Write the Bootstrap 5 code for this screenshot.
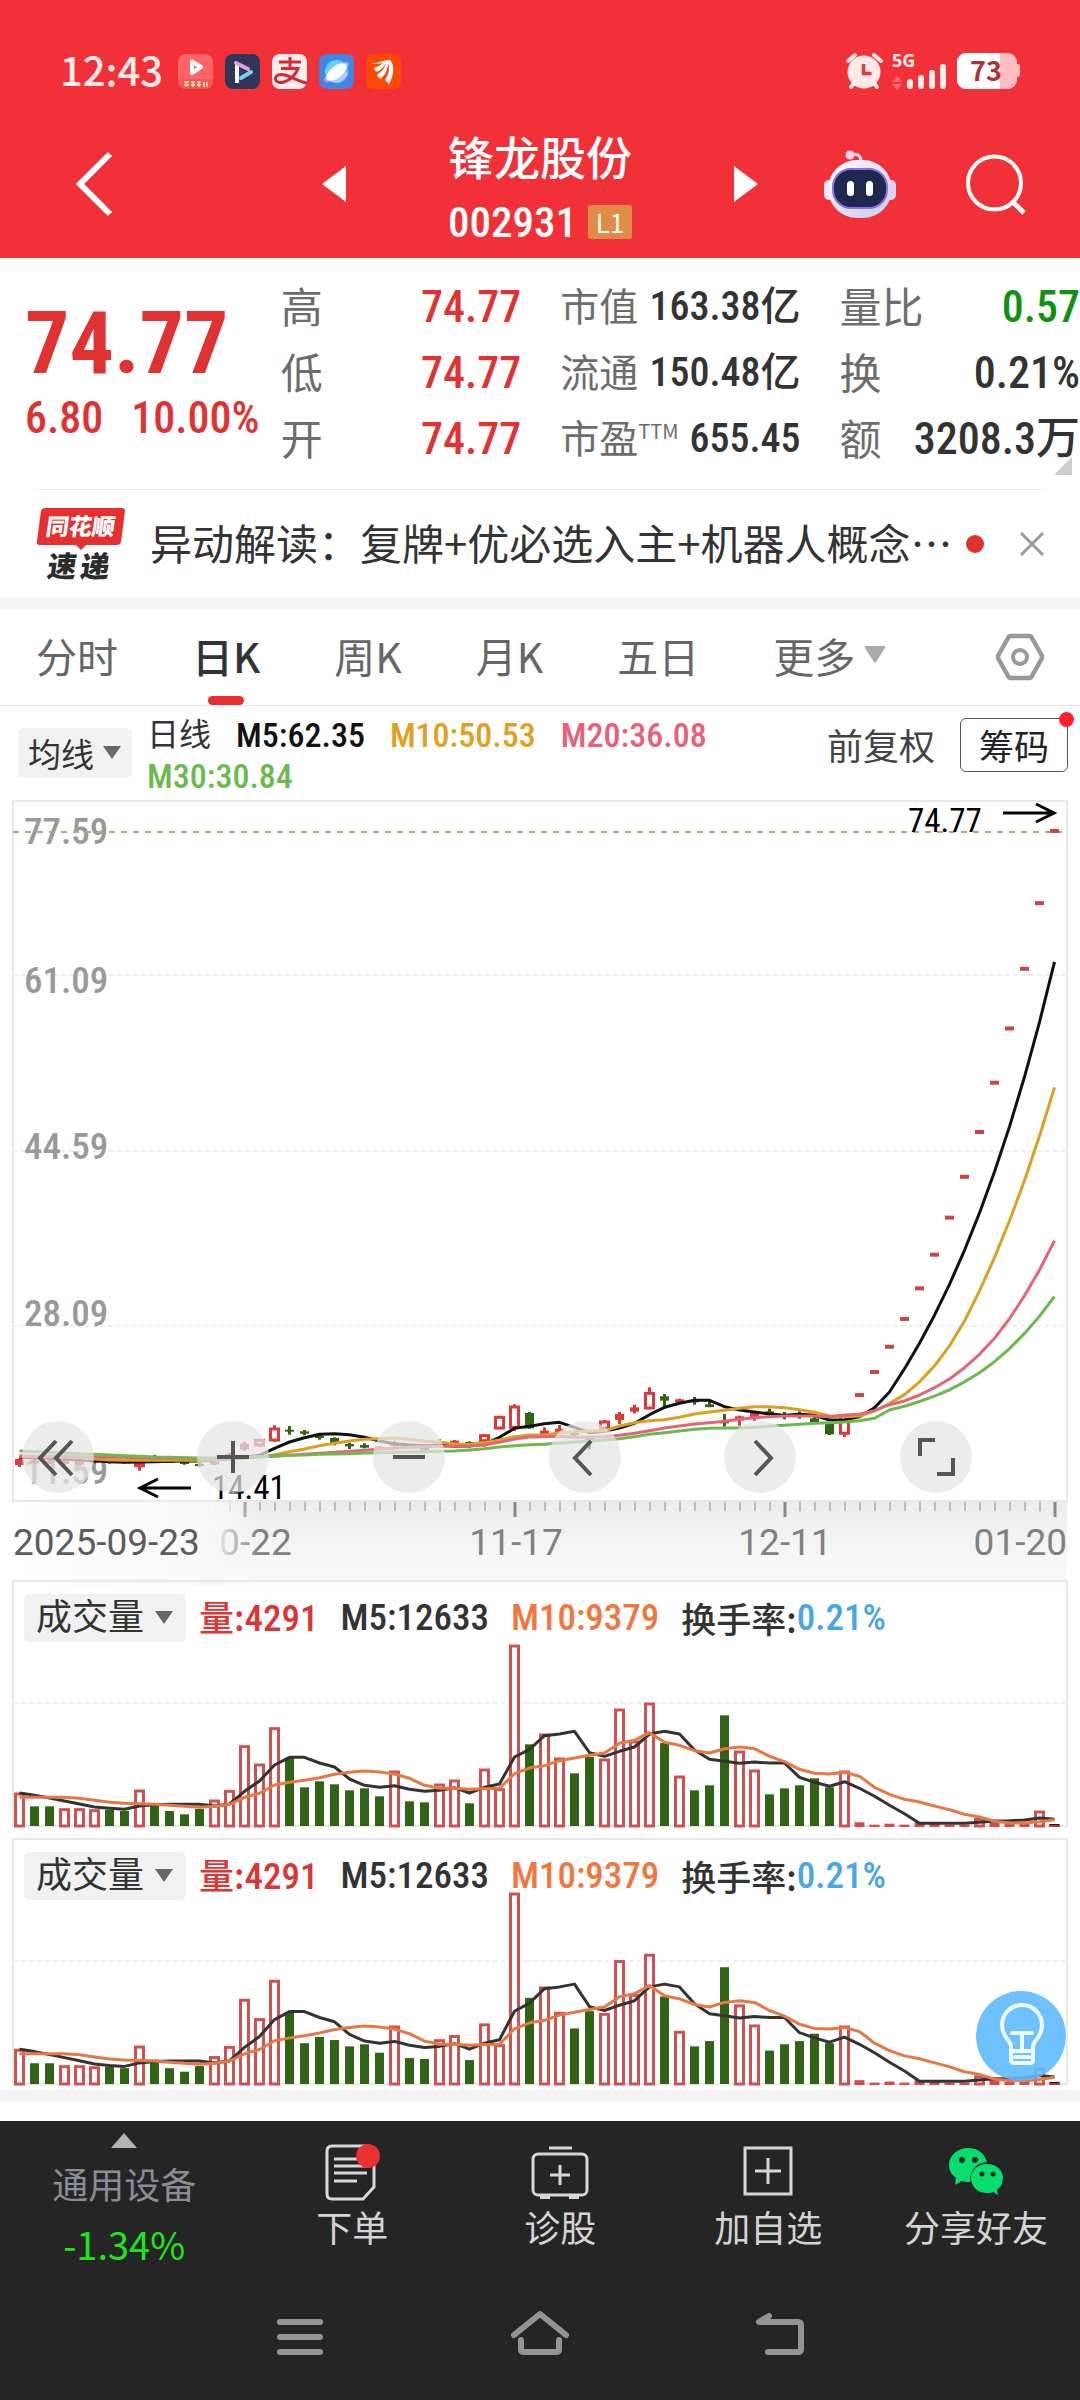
<!DOCTYPE html>
<html lang="zh-CN">
<head>
<meta charset="utf-8">
<meta name="viewport" content="width=device-width, initial-scale=1">
<title>锋龙股份 002931</title>
<link href="https://cdn.jsdelivr.net/npm/bootstrap@5.3.0/dist/css/bootstrap.min.css" rel="stylesheet">
<style>
  :root { --num: "Roboto Condensed", Roboto, "Noto Sans CJK SC", sans-serif; --cjk: "Noto Sans CJK SC", "Noto Sans", sans-serif; }
  body { font-family: var(--cjk); background: #fff; color: #333; overflow-x: hidden; }
  button { font-family: inherit; white-space: nowrap; }
  svg { display: block; flex: none; overflow: visible; }
  .even { flex: 1 1 0; min-width: 0; }
  .plain { background: none; border: 0; padding: 0; color: inherit; text-decoration: none; }
  .num { font-family: var(--num); font-weight: 500; }
  .up { color: #e03232; }
  .top-red { background: #f13038; color: #fff; }
  .status { height: 110px; padding: 47px 60px 0 60px; }
  .clock { font-size: 40px; font-weight: 500; line-height: 44px; margin-bottom: 4px; color: #ffeaea; width: 106px; }
  .app-icons { gap: 12px; margin-left: 12px; }
  .title-bar { height: 148px; }
  .title-side { flex: 1 1 200px; }
  .title-left { padding-left: 76px; }
  .title-right { padding: 0 54px 0 66px; }
  .title-mid { gap: 102px; }
  .stock-name { font-size: 46px; line-height: 56px; font-weight: 500; margin: 0 0 4px; }
  .stock-code { font-size: 43px; line-height: 70px; }
  .level { background: #e08c46; border-radius: 3px; width: 44px; height: 34px; font-size: 26px; line-height: 34px; font-family: var(--cjk); font-weight: 400; }
  .quote { height: 231px; padding-top: 16px; }
  .price-box { flex: 0 0 26%; padding: 19px 0 0 25px; }
  .price { font-size: 88px; line-height: 100px; font-weight: 700; }
  .change { font-size: 44px; line-height: 50px; gap: 28px; }
  .stats { gap: 39px; }
  .stat { height: 66px; font-size: 42px; color: #6c6c6c; }
  .stat-name { margin-top: -6px; }
  .stat .num { font-size: 44px; color: #333; }
  .stat .num.up { color: #e03232; }
  .stat .num.down { color: #109010; }
  .mid-col .stat { font-size: 39px; }
  .mid-col .stat .num { font-size: 40px; }
  .stat sup { font-size: 20px; top: -14px; }
  .fold { right: 8px; bottom: 14px; }
  .news { margin: 0 36px; border-top: 1px solid #eee; height: 108px; font-size: 42px; }
  .news-link { margin: -4px 0 0 24px; color: #333; }
  .news-dot { width: 18px; height: 18px; border-radius: 50%; background: #e63030; margin-left: 13px; }
  .band { height: 12px; background: #f4f4f4; }
  .tabs { height: 97px; border-bottom: 1px solid #e6e6e6; padding: 0 36px; }
  .tab-list { gap: 74px; }
  .tab-list button { font-size: 41px; line-height: 92px; padding-bottom: 4px; color: #666; }
  .tab-list .on { color: #333; font-weight: 500; }
  .tab-list .on::after { content: ""; position: absolute; left: 50%; bottom: 0; width: 36px; height: 9px; margin-left: -18px; border-radius: 5px; background: #e63030; }
  .ma-row { height: 94px; padding: 0 12px 0 18px; }
  .pick { background: #f1f1f1; border: 0; border-radius: 6px; color: #333; height: 50px; font-size: 33px; line-height: 50px; padding: 0 10px; gap: 8px; }
  .ma-list { font-size: 34px; line-height: 41px; column-gap: 25px; margin: 9px 0 0 15px; }
  .ma-list .cjk { font-size: 32px; font-weight: 400; }
  .m5 { color: #111; } .m10 { color: #e0a020; } .m20 { color: #e86078; } .m30 { color: #6aba50; }
  .adjust { font-size: 36px; color: #444; margin: 11px 25px 0 0; line-height: 54px; }
  .chips { border: 1px solid #555; border-radius: 6px; background: #fff; color: #222; width: 108px; height: 54px; font-size: 35px; line-height: 50px; margin-top: 12px; }
  .chips i { position: absolute; right: -7px; top: -7px; width: 15px; height: 15px; border-radius: 50%; background: #ff2030; }
  .kchart { width: 100%; height: auto; }
  .axis { font-family: Roboto, sans-serif; font-size: 37px; }
  .chart-tools { position: absolute; left: 2%; right: 10%; top: 79.6%; }
  .tool { width: 72px; height: 72px; border-radius: 50%; background: rgba(228,228,228,.72); }
  .vol { margin-bottom: 10px; }
  .vol-head { position: absolute; left: 24px; top: 12px; font-size: 37px; line-height: 48px; white-space: nowrap; }
  .vol-head .pick { height: 48px; font-size: 36px; line-height: 48px; padding: 0 12px; gap: 10px; margin-right: 13px; }
  .vol-head .cjk { font-family: var(--cjk); font-size: 35px; }
  .v-now, .v-5, .v-10 { margin-right: 22px; }
  .v-now { color: #dd3434; } .v-10 { color: #f07840; } .v-rate { color: #46a6e6; }
  .bulb { right: 14px; bottom: 5px; width: 90px; height: 90px; border-radius: 50%; background: rgba(94,186,255,.9); }
  .dock { background: #252525; color: #d4d4d4; margin-top: 19px; height: 279px; }
  .dock-row { height: 167px; }
  .sector { flex: 0 0 23%; padding-top: 12px; }
  .sector .nm { font-size: 36px; line-height: 50px; color: #8c8c96; margin-top: 10px; }
  .sector .pc { font-size: 38px; line-height: 50px; color: #1ee61e; margin-top: 11px; }
  .dock-btn { padding-top: 20px; font-size: 36px; line-height: 50px; }
  .sys { padding: 20px 180px 0; }
</style>
</head>
<body>
<header class="top-red">
  <div class="status">
    <div class="d-flex align-items-center">
      <span class="clock">12:43</span>
      <div class="app-icons d-flex">
        <svg width="35" height="35" viewBox="0 0 35 35"><rect width="35" height="35" rx="8" fill="#ff6468"/><path d="M0 25h35v2a8 8 0 0 1-8 8H8a8 8 0 0 1-8-8z" fill="#ef5a50"/><path d="M14 7.500l9 5.500-9 6z" fill="none" stroke="#fff" stroke-width="4" stroke-linejoin="round"/><path d="M6 28h5M8.500 28v5M6 31h5M13 28h4M13 31h4M15 28v5M19 28h4M19 31h4M21 28v5M26 28v5M29 28v5" stroke="#ffe0c8" stroke-width="1.500"/></svg>
        <svg width="35" height="35" viewBox="0 0 35 35"><rect width="35" height="35" rx="8" fill="#30355a"/><path d="M12 13v14" stroke="#fff" stroke-width="4" stroke-linecap="square"/><path d="M11 9l12 6" stroke="#e8a0dc" stroke-width="4" stroke-linecap="round"/><path d="M16 24l10-6" stroke="#78d0f4" stroke-width="4" stroke-linecap="round"/></svg>
        <svg width="35" height="35" viewBox="0 0 35 35"><rect width="35" height="35" rx="8" fill="#ffecec"/><path d="M7 8h22M18 3v11M9 14.500h17c-2 6-8 12-14 13.500-6 1.500-9-1-8.500-4 .5-3 5-4.500 9.500-3C20 23 27 28 35 29" fill="none" stroke="#cf2c34" stroke-width="3"/></svg>
        <svg width="35" height="35" viewBox="0 0 35 35"><rect width="35" height="35" rx="8" fill="#4684e4"/><circle cx="17.500" cy="17.500" r="11.500" fill="#60d0fa"/><path d="M8 24c6 7 18 5 21-5l-5-2z" fill="#b4ccf4"/><ellipse cx="17.500" cy="18" rx="15" ry="5" transform="rotate(-38 17.500 18)" fill="#8cb8f4"/><ellipse cx="17.500" cy="18" rx="12" ry="6" transform="rotate(-38 17.500 18)" fill="#fff"/></svg>
        <svg width="35" height="35" viewBox="0 0 35 35"><rect width="35" height="35" rx="8" fill="#ff4a04"/><path d="M6 9C12 10 16 6 24 6c4 4 5 14-1 24l-4-4c4-6 5-12 3-17 0 6-3 13-8 16l-3-4c4-3 8-7 9-12-3 5-6 8-10 9l-2-4c4-1 7-3 9-6-3 2-8 2-10 2z" fill="#fff"/></svg>
      </div>
      <div class="ms-auto d-flex">
        <svg width="174" height="36" viewBox="0 0 174 36">
          <circle cx="18" cy="19" r="16.500" fill="#ffe8e8"/><path d="M2 8l7-6M35 8l-7-6M5 34l4-5M31 34l-4-5" stroke="#ffe8e8" stroke-width="4" stroke-linecap="round"/><path d="M17.500 11v9.500h8" fill="none" stroke="#e03a40" stroke-width="3.500"/>
          <text x="46" y="14" font-family="Noto Sans, sans-serif" font-weight="700" font-size="18" fill="#ffe8e8">5G</text>
          <path d="M46 29l5-6 5 6zM46 31h10l-5 6z" fill="#fb6a70"/>
          <path d="M64 29v4M75 25v8M86 20v13M97 14v19" stroke="#ffeaea" stroke-width="6" stroke-linecap="round"/>
          <rect x="111" width="60" height="36" rx="9" fill="#ffbcc0"/><rect x="170" y="11" width="4" height="13" rx="2" fill="#ffbcc0"/><path d="M154 0v36h-34a9 9 0 0 1-9-9V9a9 9 0 0 1 9-9z" fill="#fff"/>
          <text x="124" y="28" font-family="Noto Sans CJK SC, sans-serif" font-weight="700" font-size="27" fill="#b03038">73</text>
        </svg>
      </div>
    </div>
  </div>
  <nav class="title-bar d-flex align-items-center">
    <div class="title-side title-left d-flex">
      <button class="plain" aria-label="返回"><svg width="38" height="66" viewBox="0 0 38 66"><path d="M34 3L4 33l30 30" fill="none" stroke="#fff" stroke-width="6"/></svg></button>
    </div>
    <div class="title-mid d-flex align-items-center">
      <button class="plain" aria-label="上一只"><svg width="24" height="36"><path d="M24 0v36L0 18z" fill="#fff"/></svg></button>
      <div class="pt-3">
        <h1 class="stock-name">锋龙股份</h1>
        <div class="stock-code num d-flex align-items-center justify-content-between">002931<span class="level text-center">L1</span></div>
      </div>
      <button class="plain" aria-label="下一只"><svg width="24" height="36"><path d="M0 0v36l24-18z" fill="#fff"/></svg></button>
    </div>
    <div class="title-side title-right d-flex justify-content-between align-items-center">
      <button class="plain" aria-label="智能助手"><svg width="72" height="68" viewBox="0 0 72 68"><defs><linearGradient id="rb" x1="0" y1="0" x2="1" y2="1"><stop offset="0" stop-color="#fff"/><stop offset="1" stop-color="#c8c8f0"/></linearGradient></defs><path d="M27 5c5-2 10 0 10 6" fill="none" stroke="#f6d8ea" stroke-width="3"/><circle cx="26" cy="5" r="4.500" fill="#f0d4f0"/><rect x="0" y="30" width="10" height="20" rx="5" fill="#e8e8fa"/><rect x="62" y="30" width="10" height="20" rx="5" fill="#d8d4f4"/><rect x="4" y="10" width="64" height="58" rx="29" fill="url(#rb)"/><rect x="9" y="19" width="54" height="39" rx="18" fill="#1f2950" stroke="#8c6ce8" stroke-width="2"/><rect x="23" y="31" width="7" height="15" rx="3.500" fill="#fff"/><rect x="42" y="31" width="7" height="15" rx="3.500" fill="#fff"/></svg></button>
      <button class="plain" aria-label="搜索"><svg width="60" height="62" viewBox="0 0 60 62"><circle cx="28.500" cy="30" r="26.500" fill="none" stroke="#fff" stroke-width="4"/><path d="M47 49l11 11" stroke="#fff" stroke-width="5"/></svg></button>
    </div>
  </nav>
</header>

<main>
  <section class="quote d-flex position-relative">
    <div class="price-box up">
      <div class="price num">74.77</div>
      <div class="change num d-flex"><span>6.80</span><span>10.00%</span></div>
    </div>
    <div class="stats d-flex flex-fill">
      <div class="even">
        <div class="stat d-flex justify-content-between align-items-center"><span class="stat-name">高</span><span class="num up">74.77</span></div>
        <div class="stat d-flex justify-content-between align-items-center"><span class="stat-name">低</span><span class="num up">74.77</span></div>
        <div class="stat d-flex justify-content-between align-items-center"><span class="stat-name">开</span><span class="num up">74.77</span></div>
      </div>
      <div class="even mid-col text-nowrap">
        <div class="stat d-flex justify-content-between align-items-center"><span class="stat-name">市值</span><span class="num">163.38亿</span></div>
        <div class="stat d-flex justify-content-between align-items-center"><span class="stat-name">流通</span><span class="num">150.48亿</span></div>
        <div class="stat d-flex justify-content-between align-items-center"><span class="stat-name">市盈<sup>TTM</sup></span><span class="num">655.45</span></div>
      </div>
      <div class="even text-nowrap">
        <div class="stat d-flex justify-content-between align-items-center"><span class="stat-name">量比</span><span class="num down">0.57</span></div>
        <div class="stat d-flex justify-content-between align-items-center"><span class="stat-name">换</span><span class="num">0.21%</span></div>
        <div class="stat d-flex justify-content-between align-items-center"><span class="stat-name">额</span><span class="num">3208.3万</span></div>
      </div>
    </div>
    <svg class="fold position-absolute" width="18" height="18"><path d="M18 0v18H0z" fill="#ccc"/></svg>
  </section>

  <section class="news d-flex align-items-center">
    <svg width="90" height="74" viewBox="0 0 90 74" role="img" aria-label="同花顺速递"><path d="M9 1h77q3 0 3 3l-4 31q-1 3-4 3H50l-5 5-5-5H4q-4 0-3-4L5 4q1-3 4-3z" fill="#e63030"/><g transform="skewX(-8)" font-family="Noto Sans CJK SC, sans-serif" font-weight="900"><text x="13" y="28" font-size="23" fill="#fff">同花顺</text><text x="20" y="70" font-size="29" fill="#2c2c2c">速</text><text x="53" y="70" font-size="29" fill="#2c2c2c">递</text></g></svg>
    <a class="news-link plain text-nowrap" href="#">异动解读：复牌+优必选入主+机器人概念…</a>
    <span class="news-dot"></span>
    <button class="plain ms-auto" aria-label="关闭"><svg width="24" height="24"><path d="M1 1l22 22M23 1L1 23" stroke="#999" stroke-width="3"/></svg></button>
  </section>
  <div class="band"></div>

  <nav class="tabs d-flex align-items-center">
    <div class="tab-list d-flex">
      <button class="plain">分时</button>
      <button class="plain on position-relative">日K</button>
      <button class="plain">周K</button>
      <button class="plain">月K</button>
      <button class="plain">五日</button>
      <button class="plain d-flex align-items-center gap-2">更多<svg width="24" height="20"><path d="M3 1h18q2 0 1 2l-9 14q-1 2-2 0L2 3Q1 1 3 1z" fill="#aaa"/></svg></button>
    </div>
    <button class="plain ms-auto" aria-label="设置"><svg width="48" height="48" viewBox="0 0 48 48"><path d="M15 3h18q2 0 3 2l9.500 17q1 2 0 4L36 43q-1 2-3 2H15q-2 0-3-2L2.500 26q-1-2 0-4L12 5q1-2 3-2z" fill="none" stroke="#999" stroke-width="4.500"/><circle cx="24" cy="24" r="7" fill="none" stroke="#999" stroke-width="4"/></svg></button>
  </nav>

  <section class="ma-row d-flex">
    <button class="pick d-flex align-items-center align-self-center">均线<svg width="20" height="14"><path d="M1 0h18l-9 13z" fill="#666"/></svg></button>
    <div class="ma-list num even d-flex flex-wrap align-content-start">
      <span class="cjk">日线</span><span class="m5">M5:62.35</span><span class="m10">M10:50.53</span><span class="m20">M20:36.08</span><span class="m30">M30:30.84</span>
    </div>
    <button class="plain adjust align-self-start">前复权</button>
    <button class="chips position-relative p-0">筹码<i></i></button>
  </section>

  <section class="position-relative">
    <svg class="kchart" id="kline" viewBox="0 0 1080 780" role="img" aria-label="日K线图"></svg>
    <div class="chart-tools d-flex justify-content-between">
      <button class="plain tool" aria-label="最早"><svg width="72" height="72"><path d="M34 20L18 37l16 17M50 20L34 37l16 17" fill="none" stroke="#555" stroke-width="4"/></svg></button>
      <button class="plain tool" aria-label="放大"><svg width="72" height="72"><path d="M20 36h32M36 20v32" stroke="#555" stroke-width="4"/></svg></button>
      <button class="plain tool" aria-label="缩小"><svg width="72" height="72"><path d="M20 36h32" stroke="#555" stroke-width="4"/></svg></button>
      <button class="plain tool" aria-label="向左"><svg width="72" height="72"><path d="M42 20L26 37l16 17" fill="none" stroke="#555" stroke-width="4"/></svg></button>
      <button class="plain tool" aria-label="向右"><svg width="72" height="72"><path d="M31 20l16 17-16 17" fill="none" stroke="#555" stroke-width="4"/></svg></button>
      <button class="plain tool" aria-label="全屏"><svg width="72" height="72"><path d="M20 35V19h15M53 37v16H37" fill="none" stroke="#555" stroke-width="4"/></svg></button>
    </div>
  </section>

  <section class="vol position-relative">
    <svg class="kchart" id="vol1" viewBox="0 0 1080 248"></svg>
    <div class="vol-head num d-flex align-items-center">
      <button class="pick d-flex align-items-center">成交量<svg width="20" height="14"><path d="M1 0h18l-9 13z" fill="#666"/></svg></button>
      <span class="v-now"><span class="cjk">量:</span>4291</span><span class="v-5">M5:12633</span><span class="v-10">M10:9379</span><span class="cjk">换手率:</span><span class="v-rate">0.21%</span>
    </div>
  </section>
  <section class="vol position-relative mb-1">
    <svg class="kchart" id="vol2" viewBox="0 0 1080 248"></svg>
    <div class="vol-head num d-flex align-items-center">
      <button class="pick d-flex align-items-center">成交量<svg width="20" height="14"><path d="M1 0h18l-9 13z" fill="#666"/></svg></button>
      <span class="v-now"><span class="cjk">量:</span>4291</span><span class="v-5">M5:12633</span><span class="v-10">M10:9379</span><span class="cjk">换手率:</span><span class="v-rate">0.21%</span>
    </div>
    <button class="bulb plain position-absolute" aria-label="提示"><svg width="90" height="90" viewBox="0 0 90 90"><path d="M35 56c0-7-9-9-9-22a20 20 0 0 1 40 0c0 13-9 15-9 22v13q0 3-3 3H38q-3 0-3-3zM35 60h22M39 66h14M36 42h20M46 42v18" fill="none" stroke="#f0fbff" stroke-width="4" stroke-linecap="round"/></svg></button>
  </section>
  <div class="band"></div>
</main>

<footer class="dock">
  <div class="dock-row d-flex">
    <a class="sector plain d-flex flex-column align-items-center" href="#">
      <svg width="26" height="15"><path d="M13 0l13 15H0z" fill="#b4b4b4"/></svg>
      <span class="nm">通用设备</span><span class="pc">-1.34%</span>
    </a>
    <button class="plain dock-btn even d-flex flex-column align-items-center">
      <svg width="56" height="60" viewBox="0 0 56 60"><path d="M8 5h36q6 0 6 6v35L39 58H8q-5 0-5-5V10q0-5 5-5z" fill="none" stroke="#d8d8d8" stroke-width="3"/><path d="M10 18h30M10 25h33M10 32h33M10 40h23" stroke="#d8d8d8" stroke-width="3"/><circle cx="44" cy="15" r="12" fill="#e83030"/></svg>下单</button>
    <button class="plain dock-btn even d-flex flex-column align-items-center">
      <svg width="58" height="60" viewBox="0 0 58 60"><path d="M18 7h23" stroke="#d8d8d8" stroke-width="3"/><rect x="2" y="13" width="54" height="41" rx="5" fill="none" stroke="#d8d8d8" stroke-width="3"/><path d="M9 56h10M38 56h10" stroke="#d8d8d8" stroke-width="4"/><path d="M29 24v20M19 34h20" stroke="#d8d8d8" stroke-width="3"/></svg>诊股</button>
    <button class="plain dock-btn even d-flex flex-column align-items-center">
      <svg width="50" height="60" viewBox="0 0 50 60"><rect x="2" y="7" width="46" height="46" fill="none" stroke="#d8d8d8" stroke-width="3"/><path d="M25 17v26M12 30h26" stroke="#d8d8d8" stroke-width="3"/></svg>加自选</button>
    <button class="plain dock-btn even d-flex flex-column align-items-center">
      <svg width="56" height="60" viewBox="0 0 56 60"><path d="M20 7C9 7 1 15 1 24c0 6 3 10 7 13l-1 7 7-4c3 1 5 1 8 1 0-12 6-19 17-20C37 13 30 7 20 7z" fill="#06de6e"/><circle cx="14" cy="19" r="3" fill="#252525"/><circle cx="27" cy="19" r="3" fill="#252525"/><path d="M39 23c-9 0-16 6-16 14 0 9 7 15 16 15 2 0 4 0 6-1l5 3-1-5c4-3 6-7 6-12 0-8-7-14-16-14z" fill="#06de6e"/><circle cx="34" cy="33" r="2.500" fill="#252525"/><circle cx="45" cy="33" r="2.500" fill="#252525"/></svg>分享好友</button>
  </div>
  <div class="sys d-flex">
    <button class="plain even d-flex justify-content-center" aria-label="最近任务"><svg width="60" height="56" viewBox="0 0 60 56"><path d="M10 14h40M10 29h40M10 44h40" stroke="#949494" stroke-width="6" stroke-linecap="round"/></svg></button>
    <button class="plain even d-flex justify-content-center" aria-label="主页"><svg width="60" height="56" viewBox="0 0 60 56"><path d="M4 27L30 6l26 21M11 32v9q0 3 3 3h32q3 0 3-3v-9" fill="none" stroke="#949494" stroke-width="6" stroke-linecap="round" stroke-linejoin="round"/></svg></button>
    <button class="plain even d-flex justify-content-center" aria-label="返回上页"><svg width="60" height="56" viewBox="0 0 60 56"><path d="M19 8L9 14h39q3 0 3 3v24q0 3-3 3H18" fill="none" stroke="#949494" stroke-width="6" stroke-linecap="round" stroke-linejoin="round"/></svg></button>
  </div>
</footer>

<script src="https://cdn.jsdelivr.net/npm/bootstrap@5.3.0/dist/js/bootstrap.bundle.min.js"></script>
<script>
  const X = i => 19.5 + 15 * i;
  const RED = '#dc3a3a', GREEN = '#306414';
  const line = (ys, color, w) => `<polyline points="${ys.map((y, i) => X(i) + ',' + y.toFixed(1)).join(' ')}" fill="none" stroke="${color}" stroke-width="${w}" stroke-linejoin="round"/>`;

  /* candles: kind (h = hollow rise, r = rise, g = fall), body top, body bottom, high, low, in thirds of a unit */
  const Y = v => 540 + v / 3;
  const P = p => (77.59 - p) * 10.62;
  const candles = [
    ['r',357,375,355,381],['r',362,370,358,374],['r',362,370,360,372],['r',362,372,358,376],['r',366,374,362,379],['g',362,368,360,370],['g',364,369,362,371],['g',364,369,362,371],['h',365,380,362,392],['g',348,352,345,364],
    ['g',364,369,362,369],['g',366,372,364,374],['g',372,378,369,380],['r',366,374,364,375],['r',341,350,338,352],['r',311,328,305,332],['h',298,318,296,320],['h',264,303,256,305],['g',269,275,258,284],['g',274,281,270,286],
    ['g',286,294,284,299],['g',294,309,292,316],['g',312,319,308,327],['g',315,323,310,325],['r',320,324,318,326],['r',308,318,302,320],['r',316,322,314,324],['g',324,329,322,331],['r',304,318,297,320],['r',302,322,300,324],
    ['g',306,310,304,312],['h',284,305,282,320],['h',229,267,227,268],['h',198,265,193,273],['g',219,265,216,266],['r',272,285,262,288],['r',266,278,255,282],['g',275,285,272,287],['g',292,300,288,328],['h',243,268,240,270],
    ['r',222,240,216,252],['r',202,215,194,220],['h',157,207,142,208],['g',169,182,162,206],['r',178,187,176,189],['g',180,187,171,194],['g',193,201,180,202],['g',244,250,222,260],['r',229,242,227,257],['r',219,236,217,242],
    ['g',214,219,206,226],['g',222,228,216,238],['g',219,225,214,236],['g',235,247,230,248],['g',252,283,248,285],['h',224,283,222,291]];
  const limit = [21.65,23.82,26.20,28.82,31.70,34.87,38.36,42.20,46.42,51.06,56.17,61.79,67.97,74.77];
  const ma = {
    m5: [[352,353,355,357,359,362,365,367,366,365,364,363,363,360,357,352,346,325,306,293,283,281,284,292,303,311,315,317,316,318,318,312,292,265,259,251,247,262,278,274,264,250,224,202,190,181,181,200,210,216,222,226,223,226,240,239,230,203],
         [21.85,24.03,26.44,29.08,31.99,35.19,38.71,42.58,46.84,51.53,56.68,62.35], '#111'],
    m10: [[348,349,350,352,354,357,360,361,361,361,361,361,361,359,356,353,350,344,335,327,317,310,303,298,296,294,298,303,307,312,313,308,300,290,285,285,278,276,273,272,258,248,242,239,232,222,216,211,205,200,200,203,209,217,228,230,228,213],
         [20.75,21.6,22.8,24.3,26.2,28.53,31.38,34.5,37.97,41.76,45.94,50.53], '#dca020'],
    m20: [[348,349,349,349,350,351,352,352,353,354,354,355,356,356,355,353,351,349,346,343,340,337,334,331,328,325,322,320,319,319,318,315,307,297,291,290,289,292,292,290,286,280,272,264,258,252,248,244,238,233,230,228,228,228,230,225,223,212],
         [20.65,21,21.56,22.25,23.07,24.13,25.4,26.9,28.76,30.91,33.34,36.08], '#e66478'],
    m30: [[333,335,337,339,341,343,345,347,349,351,352,353,354,354,353,352,350,348,346,345,343,342,341,339,338,337,336,335,334,333,330,326,321,317,314,313,309,306,303,300,296,290,283,278,273,268,265,264,264,262,259,256,253,250,248,246,242,235],
         [20.15,20.5,20.95,21.45,22.05,22.8,23.65,24.7,25.93,27.36,28.98,30.84], '#6aba50']};

  let k = `<defs>
    <linearGradient id="axisBg" x1="0" y1="0" x2="0" y2="1"><stop offset="0" stop-color="#ebebeb"/><stop offset=".6" stop-color="#f6f6f6"/><stop offset="1" stop-color="#fafafa"/></linearGradient>
    <linearGradient id="axisFade" x1="0" x2="1" y1="0" y2="0"><stop offset="0" stop-color="#fff"/><stop offset=".8" stop-color="#f8f8f8"/><stop offset="1" stop-color="#f8f8f8" stop-opacity="0"/></linearGradient></defs>
    <rect x="13" y="702" width="1054" height="84" fill="url(#axisBg)"/>`;
  for (const y of [175, 351, 526]) k += `<path d="M13 ${y}H1067" stroke="#ebebeb" stroke-width="2" stroke-dasharray="4 4"/>`;
  k += `<path d="M13 701V1H1067V701Z" fill="none" stroke="#e8e8e8" stroke-width="2"/>`;
  [['77.59',44],['61.09',193],['44.59',359],['28.09',526],['11.59',684]].forEach(([t, y]) => k += `<text class="num" x="24" y="${y}" font-size="37" fill="#999">${t}</text>`);
  k += `<path d="M13 32H1062" stroke="#b8a478" stroke-width="2" stroke-dasharray="6 6"/>`;
  candles.forEach(([t, a, b, h, l], i) => {
    const c = t === 'g' ? GREEN : RED, x = X(i);
    if (t === 'h') k += `<path d="M${x} ${Y(h)}V${Y(a)}M${x} ${Y(b)}V${Y(l)}" stroke="${c}" stroke-width="3"/><rect x="${x - 4}" y="${Y(a) + 1}" width="8" height="${(b - a) / 3 - 2}" fill="#fff" stroke="${c}" stroke-width="3"/>`;
    else k += `<path d="M${x} ${Y(h)}V${Y(l)}" stroke="${c}" stroke-width="3"/><rect x="${x - 4.5}" y="${Y(a)}" width="9" height="${(b - a) / 3}" fill="${c}"/>`;
  });
  limit.forEach((p, j) => k += `<rect x="${X(56 + j) - 4.5}" y="${P(p) - 1}" width="9" height="4" fill="#cc4444"/>`);
  for (const [ys, ps, c] of Object.values(ma)) k += line(ys.map(Y).concat(ps.map(P)), c, 3);
  k += `<text class="num" style="font-weight:400" x="908" y="32" font-size="33" fill="#000">74.77</text><path d="M1003 13h50M1036 4l18 9-18 9" fill="none" stroke="#000" stroke-width="3"/>`;
  k += `<text class="num" style="font-weight:400" x="212" y="699" font-size="33" fill="#000">14.41</text><path d="M191 688h-50M158 679l-18 9 18 9" fill="none" stroke="#000" stroke-width="3"/>`;
  for (let i = 13; i < 70; i++) { const big = (i - 15) % 18 === 0; k += `<path d="M${X(i) + .5} 702v${big ? 15 : 9}" stroke="${big ? '#888' : '#bcbcbc'}" stroke-width="${big ? 3 : 2}"/>`; }
  [['10-22',245,'middle'],['11-17',516,'middle'],['12-11',785,'middle'],['01-20',1067,'end']].forEach(([t, x, a]) => k += `<text class="axis" x="${x}" y="755" text-anchor="${a}" fill="#808080">${t}</text>`);
  k += `<rect x="12" y="702" width="248" height="84" fill="url(#axisFade)"/><text class="axis" x="13" y="755" fill="#5c5c5c">2025-09-23</text>`;
  document.getElementById('kline').innerHTML = k;

  /* volume: bar tops and averages, in thirds of a unit, floor at 797 */
  const tops = [698,738,738,745,745,748,748,752,689,728,752,762,746,719,690,556,611,502,592,681,663,672,690,684,708,632,723,726,671,659,729,626,685,254,552,521,593,639,590,596,446,542,428,548,647,690,675,465,572,629,702,684,675,654,681,632,786,793,790,793,786,790,793,793,774,786,791,786,752,791];
  const falls = new Set([1,2,6,7,9,10,11,12,18,19,20,21,22,23,24,26,27,30,34,37,38,43,45,46,47,50,51,52,53,54]);
  const v5 = [698,705,713,722,731,740,744,747,737,733,732,732,732,737,731,693,662,614,591,591,608,620,656,675,681,676,687,693,690,682,698,681,671,590,567,526,521,513,577,588,573,560,521,513,521,569,597,603,609,605,608,608,651,666,678,664,684,708,735,760,789,789,789,789,786,782,781,779,773,777];
  const v10 = [711,711,711,711,714,720,726,729,730,732,735,738,741,738,732,711,699,674,666,660,652,642,636,632,635,641,654,675,684,684,687,685,684,640,623,616,601,593,585,578,549,540,517,546,555,571,578,565,560,565,588,604,627,639,641,636,648,681,702,717,725,737,748,762,770,783,788,788,784,778];
  function volume(id, scale) {
    const V = v => 246 - (797 - v) / 3 * scale;
    let s = `<path d="M13 123H1067" stroke="#ebebeb" stroke-width="2" stroke-dasharray="4 4"/><path d="M13 246V1H1067V246Z" fill="none" stroke="#e8e8e8" stroke-width="2"/>`;
    tops.forEach((t, i) => {
      const x = X(i), y = V(t), h = 246 - y;
      s += falls.has(i) ? `<rect x="${x - 4.5}" y="${y}" width="9" height="${h}" fill="${GREEN}"/>`
        : h < 5 ? `<rect x="${x - 5}" y="${y}" width="10" height="${h + 1}" fill="${i === 69 ? '#111' : '#d84848'}"/>`
        : `<rect x="${x - 4}" y="${y + 1}" width="8" height="${h - 1}" fill="#fff" stroke="#cf5252" stroke-width="3"/>`;
    });
    s += `<rect x="1049" y="245" width="11" height="2" fill="#c43030"/>`;
    s += line(v5.map(V), '#333', 3) + line(v10.map(V), '#e67846', 3);
    document.getElementById(id).innerHTML = s;
  }
  volume('vol1', 1);
  volume('vol2', 1.055);
</script>
</body>
</html>
